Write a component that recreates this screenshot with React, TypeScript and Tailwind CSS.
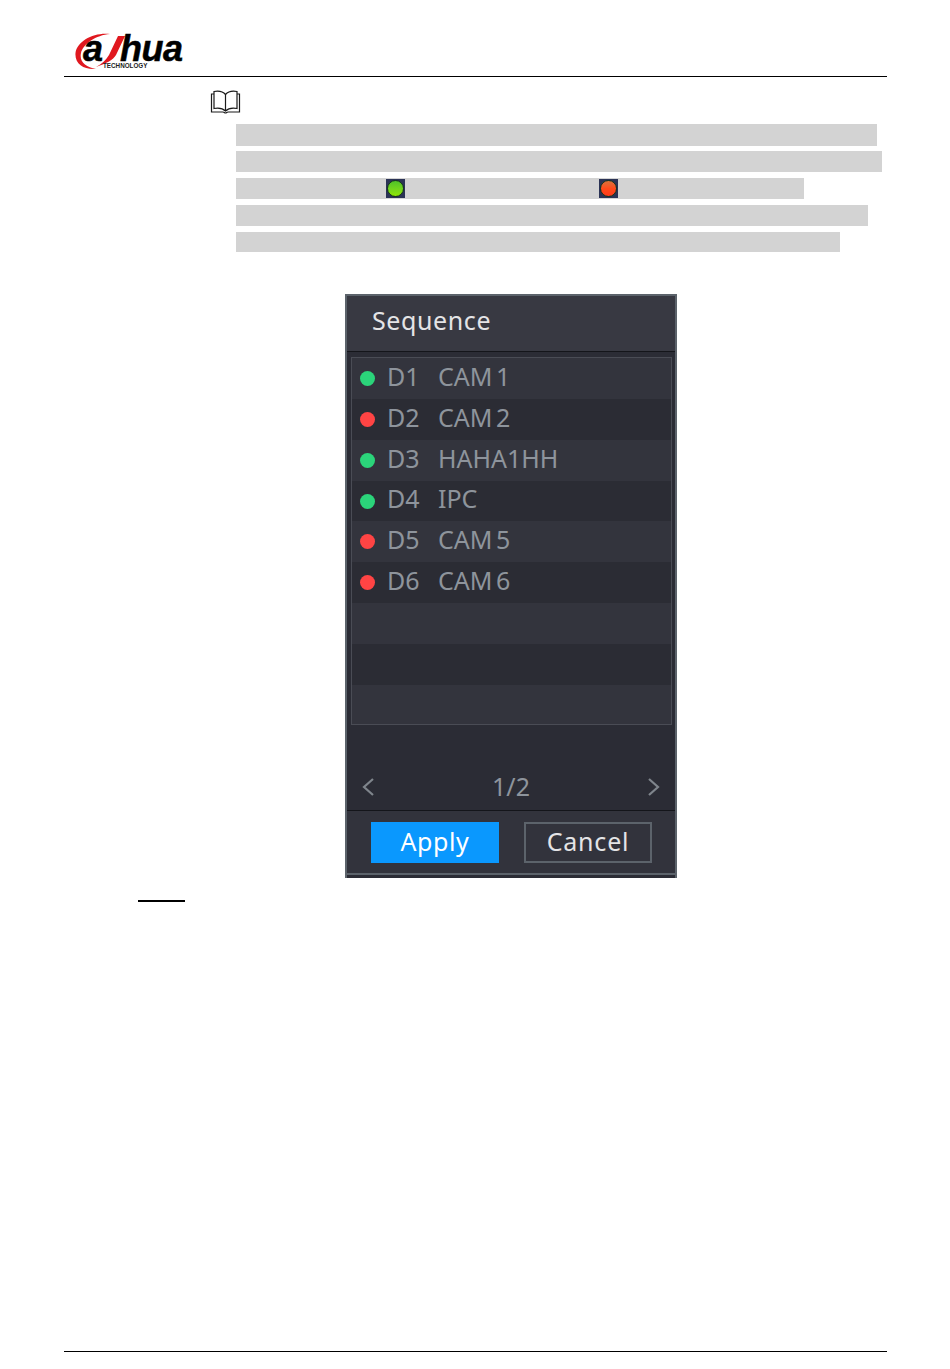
const channels = [
  { id: "D1", name: "CAM 1", online: true },
  { id: "D2", name: "CAM 2", online: false },
  { id: "D3", name: "HAHA1HH", online: true },
  { id: "D4", name: "IPC", online: true },
  { id: "D5", name: "CAM 5", online: false },
  { id: "D6", name: "CAM 6", online: false },
  null,
  null,
  null,
]

const rowHeights = ["h-[41px]", "h-[41px]", "h-[41px]", "h-[40px]", "h-[41px]", "h-[41px]", "h-[41px]", "h-[41px]", "h-[39px]"]

const Logo: React.FC = () => (
  <div className="relative ml-[10px] h-[37px] w-[110px]">
    <svg className="absolute left-0 top-0" width="56" height="37" viewBox="0 0 56 37">
      <path d="M36 1C20 -1 3 8 1.500 20C0.500 31 10 37 22 36C12 34 5 29 7 20C9 11 22 2 36 1Z" fill="#e0181f" />
      <path d="M44 3L51 3L42 22C39 27 33 30 22 34C28 31 32 27 35 22Z" fill="#e0181f" />
    </svg>
    <div className="absolute left-[9px] top-[5px] font-['Liberation_Sans',sans-serif] text-[36px] font-bold italic leading-[22px] text-black [-webkit-text-stroke:0.5px_black]">
      a
    </div>
    <div className="absolute left-[46px] top-[5px] font-['Liberation_Sans',sans-serif] text-[36px] font-bold italic leading-[22px] tracking-[-0.5px] text-black [-webkit-text-stroke:0.5px_black]">
      hua
    </div>
    <div className="absolute left-[29px] top-[30px] font-['Liberation_Sans',sans-serif] text-[6.300px] font-bold leading-[6px] text-[#222]">
      TECHNOLOGY
    </div>
  </div>
)

const BookIcon: React.FC = () => (
  <svg width="31" height="24" viewBox="0 0 31 24" fill="none" stroke="#1a1a1a" strokeWidth="1.200">
    <path d="M15.500 4.500C13 1.500 8 0.800 4 1.500V18.500C8 17.800 13 18.500 15.500 21C18 18.500 23 17.800 27 18.500V1.500C23 0.800 18 1.500 15.500 4.500Z" />
    <path d="M15.500 4.500V21" />
    <path d="M4 4H1.500V22H13C14 22 14.500 23 15.500 23C16.500 23 17 22 18 22H29.500V4H27" />
  </svg>
)

const StatusGlyph: React.FC<{ className: string }> = ({ className }) => (
  <div className="flex h-[19px] w-[19px] items-center justify-center bg-[#2b3355]">
    <div className={`h-[17px] w-[17px] rounded-full border border-[#16331c] ${className}`} />
  </div>
)

const App: React.FC = () => {
  return (
    <div className="flex h-[1369px] w-[950px] flex-col overflow-hidden bg-white pl-[64px] pr-[63px]">
      <header className="flex h-[77px] items-end border-b border-black pb-[6px]">
        <Logo />
      </header>

      <div className="ml-[146px] mt-[13px]">
        <BookIcon />
      </div>

      <div className="ml-[172px] mt-[10px] flex flex-col">
        <div className="h-[22px] w-[641px] bg-[#d3d3d3]" />
        <div className="mt-[5px] h-[21px] w-[646px] bg-[#d3d3d3]" />
        <div className="mt-[6px] flex h-[21px] w-[568px] items-center bg-[#d3d3d3]">
          <div className="ml-[150px]">
            <StatusGlyph className="bg-linear-to-b from-[#4fc228] to-[#8ee600]" />
          </div>
          <div className="ml-[194px]">
            <StatusGlyph className="bg-linear-to-b from-[#d8703a] via-[#ff4a1a] to-[#ff3a1a]" />
          </div>
        </div>
        <div className="mt-[6px] h-[21px] w-[632px] bg-[#d3d3d3]" />
        <div className="mt-[6px] h-[20px] w-[604px] bg-[#d3d3d3]" />
      </div>

      <div className="ml-[281px] mt-[42px] flex h-[584px] w-[332px] flex-col border-x-2 border-t-2 border-[#5c636b] bg-[#2b2c35] font-['Noto_Sans',sans-serif]">
        <div className="flex h-[56px] items-center border-b border-[#14151a] bg-[#383942] pb-[5px] pl-[25px] text-[25px] tracking-[0.6px] text-[#e4e4e6]">
          Sequence
        </div>

        <div className="ml-[4px] mr-[3px] mt-[5px] flex flex-col border border-[#4a4c55]">
          {channels.map((channel, index) => (
            <div
              key={index}
              className={`flex items-center ${rowHeights[index]} ${index % 2 === 0 ? "bg-[#33343d]" : "bg-[#2b2c34]"}`}
            >
              {channel && (
                <>
                  <span className={`ml-[8px] h-[15px] w-[15px] rounded-full ${channel.online ? "bg-[#2bd47a]" : "bg-[#ff4444]"}`} />
                  <span className="mb-[4px] ml-[12px] w-[51px] text-[25px] text-[#8e949c]">{channel.id}</span>
                  <span className="mb-[4px] text-[25px] text-[#8e949c] [word-spacing:-3px]">{channel.name}</span>
                </>
              )}
            </div>
          ))}
        </div>

        <div className="mt-[43px] flex h-[42px] items-center justify-between px-[14px] pb-[4px] text-[25px] text-[#8e949c]">
          <svg width="14" height="20" viewBox="0 0 14 20" fill="none" stroke="#7f858c" strokeWidth="2.200">
            <path d="M12 2L3 10L12 18" />
          </svg>
          <span>1/2</span>
          <svg width="14" height="20" viewBox="0 0 14 20" fill="none" stroke="#7f858c" strokeWidth="2.200">
            <path d="M2 2L11 10L2 18" />
          </svg>
        </div>

        <div className="flex h-[63px] items-start gap-[25px] border-t border-[#14151a] bg-[#32333c] pl-[24px] pt-[11px]">
          <button className="flex h-[41px] w-[128px] items-center justify-center bg-[#0a98fe] pb-[2px] text-[25px] tracking-[0.6px] text-white">
            Apply
          </button>
          <button className="flex h-[41px] w-[128px] items-center justify-center border-2 border-[#5c636b] pb-[2px] text-[25px] tracking-[0.8px] text-[#e4e4e6]">
            Cancel
          </button>
        </div>

        <div className="h-[2px] bg-[#5c636b]" />
      </div>

      <div className="ml-[74px] mt-[22px] h-[2px] w-[47px] bg-black" />

      <div className="mb-[17px] mt-auto h-[1px] bg-black" />
    </div>
  )
}

export default App
